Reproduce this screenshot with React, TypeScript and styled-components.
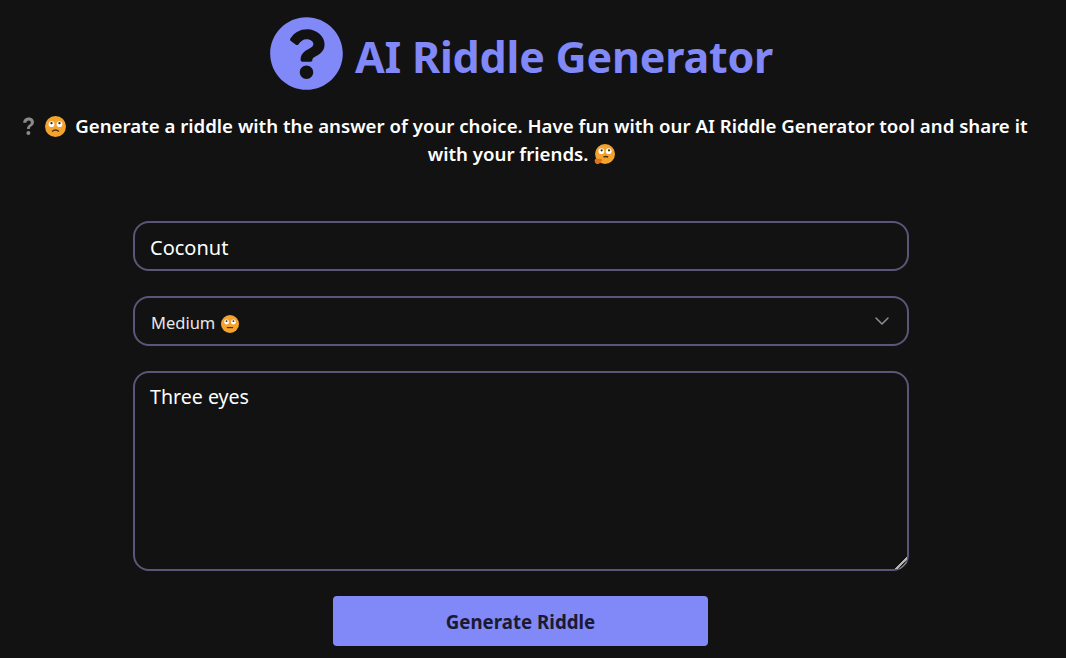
import { ChevronDown } from 'lucide-react';
import { FaQuestionCircle } from 'react-icons/fa';
import styled, { createGlobalStyle } from 'styled-components';

const FONT = `"Noto Sans", "Open Sans", sans-serif`;

const GlobalStyle = createGlobalStyle`
  html, body {
    margin: 0;
    padding: 0;
    background: #121212;
    color-scheme: dark;
    overflow: hidden;
  }
  * {
    box-sizing: border-box;
  }
`;

function QuestionEmoji() {
  return (
    <EmojiSvg viewBox="0 0 20 20" $size={21}>
      <path
        d="M5 6.500C5 3.500 7.200 1.500 10.200 1.500c3 0 5 1.800 5 4.300 0 2-1 3-2.400 4-1.100.8-1.500 1.300-1.500 2.600H8.600c0-2 .7-3 2.100-4 1-.7 1.500-1.300 1.500-2.300 0-1-.8-1.800-2-1.800-1.300 0-2.200.9-2.200 2.200z"
        fill="#8a8a8a"
      />
      <circle cx="9.900" cy="16.300" r="1.900" fill="#8a8a8a" />
    </EmojiSvg>
  );
}

function RollingEyes({ flat, size }: { flat?: boolean; size: number }) {
  return (
    <EmojiSvg viewBox="0 0 20 20" $size={size}>
      <circle cx="10" cy="10" r="10" fill="#f4a32e" />
      <circle cx="6.200" cy="7.800" r="2.700" fill="#fff" />
      <circle cx="13.800" cy="7.800" r="2.700" fill="#fff" />
      <circle cx="6.200" cy="6.800" r="1.100" fill="#3a2a1a" />
      <circle cx="13.800" cy="6.800" r="1.100" fill="#3a2a1a" />
      {flat ? (
        <path d="M6.500 14h7" stroke="#4a3215" strokeWidth="1.300" />
      ) : (
        <path d="M6.800 14.800c1.800-2 4.600-2 6.400 0" stroke="#4a3215" strokeWidth="1.300" fill="none" />
      )}
    </EmojiSvg>
  );
}

function ThinkingEmoji() {
  return (
    <EmojiSvg viewBox="0 0 20 20" $size={21}>
      <circle cx="10.500" cy="9.500" r="9.500" fill="#f4a32e" />
      <circle cx="7" cy="6.800" r="2.700" fill="#fff" />
      <circle cx="14" cy="6.800" r="2.700" fill="#fff" />
      <circle cx="7.300" cy="6" r="1.100" fill="#3a2a1a" />
      <circle cx="14.300" cy="6" r="1.100" fill="#3a2a1a" />
      <path d="M9 12.500c1.500-.8 3-.8 4.500 0" stroke="#4a3215" strokeWidth="1.200" fill="none" />
      <path
        d="M1 14.500c1.800-.6 3.800-.5 5.500-.3 1.200.2 1.600 1 1 1.700l-1.500 1.600c-1 1.300-2.600 2-4 1.300C.6 18 .2 15.500 1 14.500z"
        fill="#e2711d"
      />
    </EmojiSvg>
  );
}

export default function App() {
  return (
    <>
      <GlobalStyle />
      <Page>
        <Header>
          <FaQuestionCircle size={75} color="#8188f8" />
          <Title>AI Riddle Generator</Title>
        </Header>
        <Intro>
          <QuestionEmoji />{' '}
          <LeadFace>
            <RollingEyes size={21} />
          </LeadFace>{' '}
          Generate a riddle with the answer of your choice. Have fun with our AI Riddle Generator
          tool and share it with your friends. <ThinkingEmoji />
        </Intro>
        <Form>
          <TextInput type="text" defaultValue="Coconut" />
          <SelectBox>
            <SelectLabel>
              Medium <RollingEyes size={18} flat />
            </SelectLabel>
            <ChevronDown size={24} color="#8f8d99" strokeWidth={1.500} />
          </SelectBox>
          <TextArea defaultValue="Three eyes" />
          <SubmitButton type="button">Generate Riddle</SubmitButton>
        </Form>
      </Page>
    </>
  );
}

const Page = styled.main`
  width: 1042px;
  min-height: 658px;
  padding-top: 17px;
  background: #121212;
  font-family: ${FONT};
  display: flex;
  flex-direction: column;
  align-items: center;
`;

const Header = styled.header`
  display: flex;
  align-items: center;
  gap: 11px;
  height: 73px;
`;

const Title = styled.h1`
  margin: 0;
  padding-top: 6px;
  color: #8188f8;
  font-size: 43px;
  line-height: 1;
  font-weight: 700;
  letter-spacing: -0.2px;
`;

const Intro = styled.p`
  margin: 22px 0 0;
  padding: 0 8px 0 10px;
  width: 100%;
  color: #fff;
  font-size: 18.650px;
  line-height: 28px;
  font-weight: 600;
  text-align: center;
`;

const LeadFace = styled.span`
  margin-right: 3px;
`;

const EmojiSvg = styled.svg<{ $size: number }>`
  width: ${(p) => p.$size}px;
  height: ${(p) => p.$size}px;
  display: inline-block;
  vertical-align: -4px;
  margin: 0 1px;
`;

const Form = styled.form`
  width: 776px;
  margin-top: 53px;
  display: flex;
  flex-direction: column;
  align-items: flex-start;
  gap: 25px;
`;

const TextInput = styled.input`
  width: 100%;
  height: 50px;
  padding: 2px 16px 0 15px;
  background: #121212;
  border: 2px solid #5b5678;
  border-radius: 16px;
  color: #fff;
  font-family: ${FONT};
  font-size: 20px;
  outline: none;
`;

const SelectBox = styled.div`
  width: 100%;
  height: 50px;
  padding: 2px 13px 0 16px;
  border: 2px solid #5b5678;
  border-radius: 16px;
  display: flex;
  align-items: center;
  justify-content: space-between;

  svg:last-child {
    margin-top: -2px;
  }
`;

const SelectLabel = styled.span`
  color: #e8e8e8;
  font-size: 16.500px;
`;

const TextArea = styled.textarea`
  width: 100%;
  height: 200px;
  padding: 10px 16px 10px 15px;
  background: #121212;
  border: 2px solid #5b5678;
  border-radius: 16px;
  color: #fff;
  font-family: ${FONT};
  font-size: 19.600px;
  line-height: 28px;
  outline: none;
  display: block;

  &::-webkit-resizer {
    background: linear-gradient(
      135deg,
      transparent 60%,
      #b5b5b5 60%,
      #b5b5b5 68%,
      transparent 68%,
      transparent 74%,
      #8a8a8a 74%,
      #8a8a8a 79%,
      transparent 79%
    );
  }
`;

const SubmitButton = styled.button`
  width: 375px;
  height: 50px;
  margin-left: 200px;
  padding-top: 1px;
  background: #8188f8;
  border: none;
  border-radius: 4px;
  color: #1a1a33;
  font-family: ${FONT};
  font-size: 18.700px;
  font-weight: 700;
`;
